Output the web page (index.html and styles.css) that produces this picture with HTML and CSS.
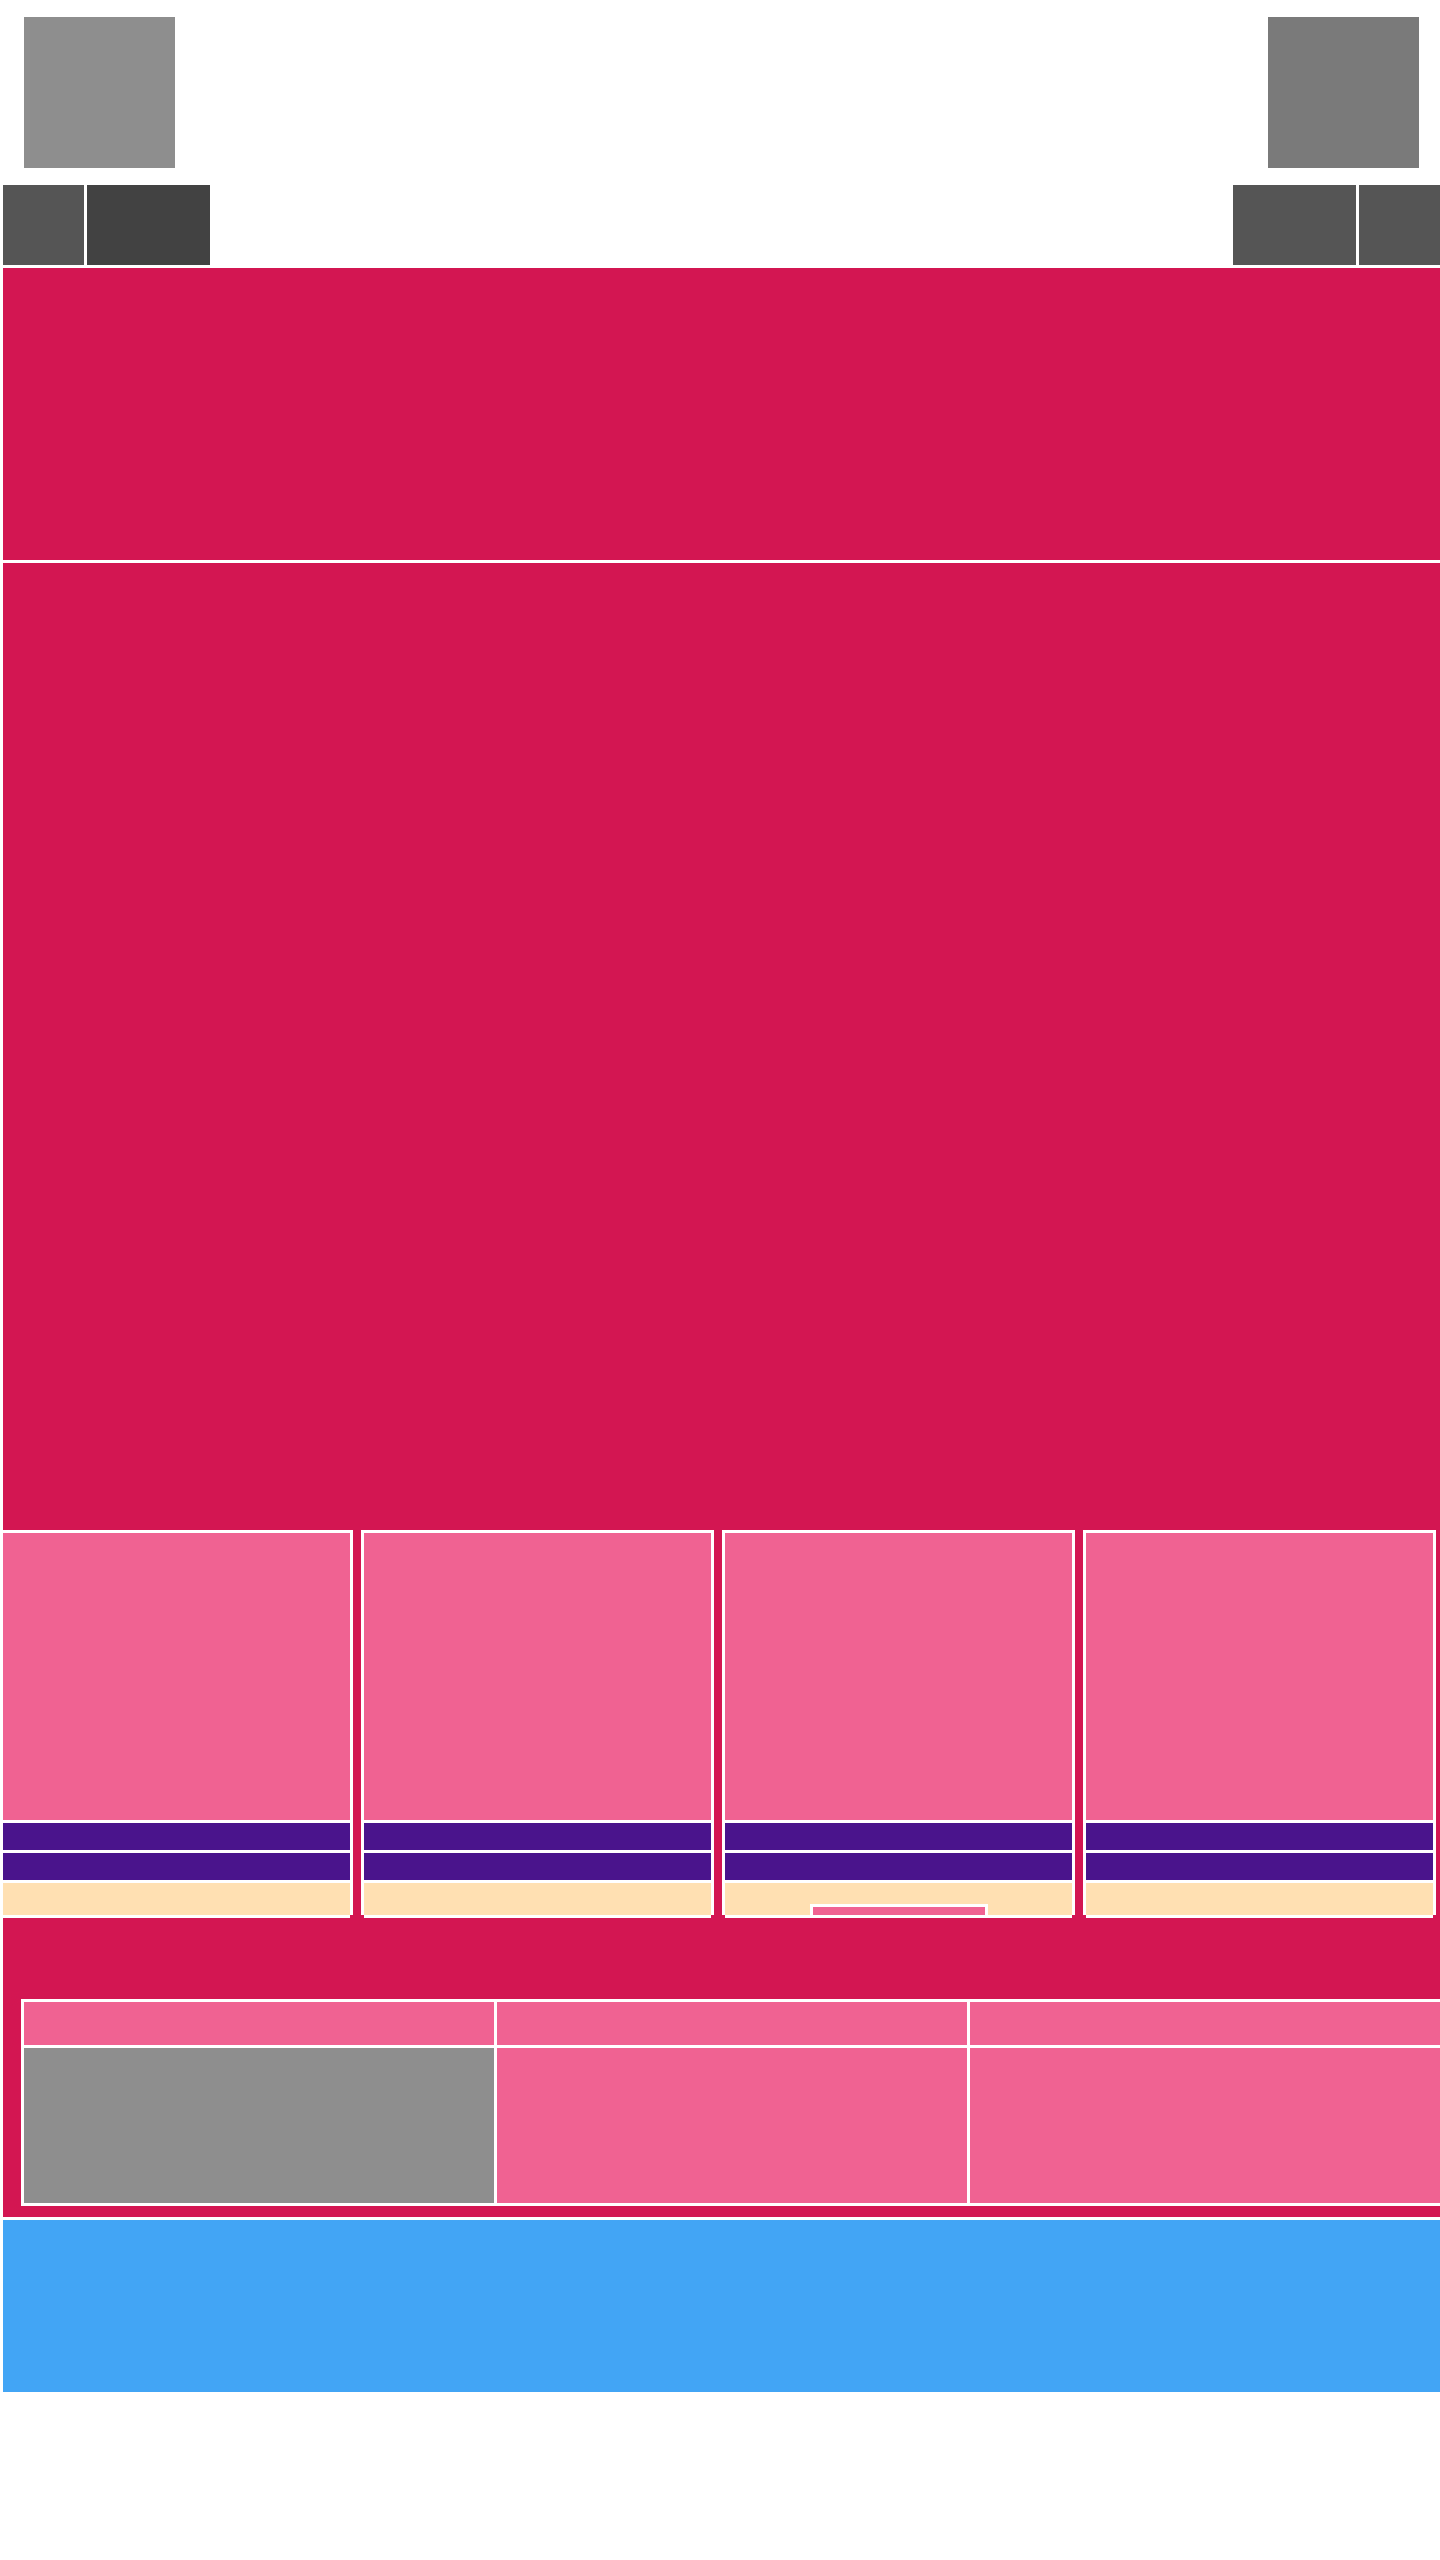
FILE: index.html
```html
<!DOCTYPE html>
<html lang="en">
<head>
    <meta charset="UTF-8">
    <title></title>
    <link rel="stylesheet" href="styles.css">
</head>
<body>
<div class="page">
    <div class="header">
        <div class="logo logo-left"></div>
        <div class="logo logo-right"></div>
    </div>
    <div class="nav">
        <div class="nav-group">
            <a class="nav-btn small" href="javascript:;"></a>
            <a class="nav-btn wide dark" href="javascript:;"></a>
        </div>
        <div class="nav-group">
            <a class="nav-btn wide" href="javascript:;"></a>
            <a class="nav-btn small" href="javascript:;"></a>
        </div>
    </div>
    <div class="hero"></div>
    <div class="main">
        <ul class="cards">
            <li class="card">
                <div class="card-img"></div>
                <div class="card-row"></div>
                <div class="card-row"></div>
                <div class="card-foot"></div>
            </li>
            <li class="card">
                <div class="card-img"></div>
                <div class="card-row"></div>
                <div class="card-row"></div>
                <div class="card-foot"></div>
            </li>
            <li class="card">
                <div class="card-img"></div>
                <div class="card-row"></div>
                <div class="card-row"></div>
                <div class="card-foot"><a class="card-btn" href="javascript:;"></a></div>
            </li>
            <li class="card">
                <div class="card-img"></div>
                <div class="card-row"></div>
                <div class="card-row"></div>
                <div class="card-foot"></div>
            </li>
        </ul>
        <div class="table">
            <div class="cell head"></div>
            <div class="cell head"></div>
            <div class="cell head"></div>
            <div class="cell body gray"></div>
            <div class="cell body"></div>
            <div class="cell body"></div>
        </div>
    </div>
    <div class="footer"></div>
</div>
</body>
</html>
```

FILE: styles.css
```css
html,body{
    width: 100%;
    overflow-x: hidden;
}
*{
    margin:0;
    padding:0;
    list-style: none;
    box-sizing: border-box;
    font-family: "Liberation Sans", Arial, sans-serif;
}
body{
    background: #fff;
}
a{
    display: block;
    text-decoration: none;
}
.page{
    margin-left: 3px;
    width: 1437px;
}
/*头部两个logo*/
.header{
    display: flex;
    justify-content: space-between;
    padding: 17px 21px;
}
.logo{
    width: 151px;
    height: 151px;
    background: #8e8e8e;
}
.logo-right{
    background: #7a7a7a;
}
.nav{
    display: flex;
    justify-content: space-between;
    height: 80px;
}
.nav-group{
    display: flex;
    gap: 3px;
}
.nav-btn{
    height: 80px;
    background: #555;
}
.nav-btn.small{
    width: 81px;
}
.nav-btn.wide{
    width: 123px;
}
.nav-btn.dark{
    background: #424242;
}
.hero{
    margin-top: 3px;
    height: 292px;
    background: #d31652;
}
.main{
    margin-top: 3px;
    padding: 967px 0 11px;
    background: #d31652;
}
/*卡片*/
.cards{
    display: flex;
    gap: 8px;
    margin-left: -3px;
}
.card{
    width: 353px;
    height: 385px;
    border: 3px solid #fff;
}
.card-img{
    height: 290px;
    background: #f06292;
    border-bottom: 3px solid #fff;
}
.card-row{
    height: 30px;
    background: #4a148c;
    border-bottom: 3px solid #fff;
}
.card-foot{
    height: 35px;
    background: #ffe0b2;
    border-bottom: 3px solid #fff;
    overflow: hidden;
    display: flex;
    justify-content: center;
    padding-top: 21px;
}
.card-btn{
    width: 178px;
    height: 24px;
    background: #f06292;
    border: 3px solid #fff;
}
/*表格*/
.table{
    display: grid;
    grid-template-columns: repeat(3, 470px);
    grid-template-rows: 43px 155px;
    gap: 3px;
    width: 1422px;
    margin: 84px 0 0 18px;
    padding: 3px;
    background: #fff;
}
.cell{
    background: #f06292;
}
.cell.gray{
    background: #8e8e8e;
}
.footer{
    margin-top: 3px;
    height: 172px;
    background: #42a5f5;
}
```
